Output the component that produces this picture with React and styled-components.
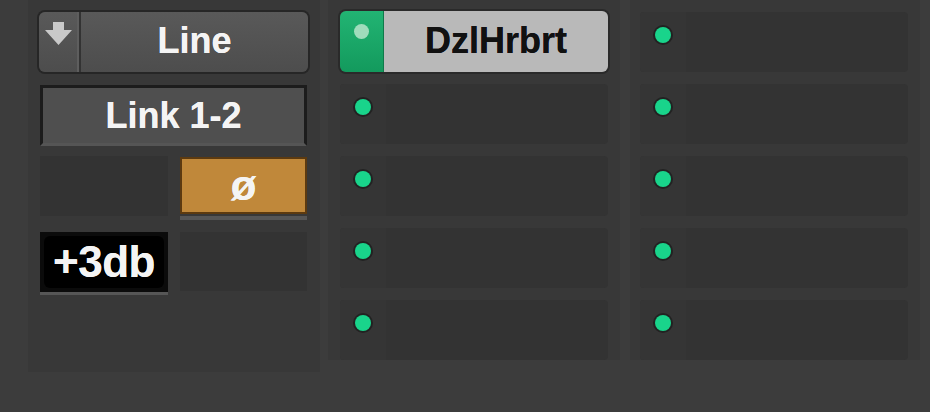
import styled, { createGlobalStyle } from "styled-components";

const GlobalStyle = createGlobalStyle`
  html, body {
    margin: 0;
    padding: 0;
    background: #3c3c3c;
    font-family: "Liberation Sans", Arial, sans-serif;
  }
`;

const Mixer = styled.div`
  display: flex;
  align-items: flex-start;
  width: 930px;
  height: 412px;
  padding-left: 28px;
  box-sizing: border-box;
  overflow: hidden;
`;

const LeftPanel = styled.div`
  width: 292px;
  height: 372px;
  box-sizing: border-box;
  padding: 10px 13px 0 12px;
  background: #383838;
  display: grid;
  grid-template-columns: 128px 127px;
  grid-auto-rows: min-content;
  column-gap: 12px;
`;

const Column = styled.div`
  width: ${(p) => p.$width}px;
  height: 360px;
  margin-left: ${(p) => p.$gap}px;
  box-sizing: border-box;
  padding: 12px 12px 0 ${(p) => p.$pad}px;
  background: #383838;
  display: flex;
  flex-direction: column;
  gap: 12px;
`;

const LabelText = styled.span`
  font-size: ${(p) => p.$size || 36}px;
  font-weight: bold;
  color: ${(p) => p.$color || "#f4f4f4"};
  letter-spacing: ${(p) => p.$track || 0}px;
  line-height: 1;
  text-shadow: 0 0 0.6px ${(p) => p.$color || "#f4f4f4"};
`;

const SelectButton = styled.div`
  grid-column: 1 / 3;
  height: 60px;
  margin: 2px -1px 13px -1px;
  border-radius: 6px;
  box-shadow: 0 0 0 2px #262626;
  background: linear-gradient(#595959, #4d4d4d);
  display: flex;
  overflow: hidden;
`;

const ArrowSegment = styled.div`
  width: 42px;
  border-right: 2px solid #333;
  box-shadow: inset -2px 0 0 #5e5e5e;
  display: flex;
  justify-content: center;
  padding-top: 10px;
  box-sizing: border-box;
`;

const SegmentLabel = styled.div`
  flex: 1;
  display: flex;
  align-items: center;
  justify-content: center;
  padding-bottom: 2px;
`;

const WideButton = styled.div`
  grid-column: 1 / 3;
  height: 61px;
  box-sizing: border-box;
  border: 3px solid #1c1c1c;
  border-bottom: 3px solid #555;
  background: #4f4f4f;
  display: flex;
  align-items: center;
  justify-content: center;
  margin-bottom: 10px;
`;

const Slot = styled.div`
  height: ${(p) => p.$h || 60}px;
  background: ${(p) => p.$bg || "#333"};
  margin-bottom: ${(p) => p.$mb ?? 16}px;
  border-bottom: ${(p) => (p.$bar ? "3px solid #565656" : "none")};
  display: flex;
  align-items: center;
  justify-content: center;
  box-sizing: border-box;
`;

const PhaseButton = styled.div`
  height: 57px;
  margin: 1px 0 18px;
  border: 2px solid #5c3a10;
  background: #c0883a;
  display: flex;
  align-items: center;
  justify-content: center;
  box-sizing: border-box;
  position: relative;
  &::after {
    content: "";
    position: absolute;
    left: -2px;
    right: -2px;
    bottom: -8px;
    height: 4px;
    background: #565656;
  }
`;

const GainBox = styled.div`
  width: 120px;
  height: 52px;
  border-radius: 6px;
  background: #000;
  display: flex;
  align-items: center;
  justify-content: center;
`;

const Cell = styled.div`
  height: 60px;
  border-radius: 4px;
  background: #333;
  display: flex;
  flex-shrink: 0;
`;

const CellHandle = styled.div`
  width: 46px;
  background: #353535;
  border-radius: 4px 0 0 4px;
  display: flex;
  justify-content: center;
  padding-top: 15px;
  box-sizing: border-box;
`;

const Dot = styled.div`
  width: ${(p) => p.$d || 16}px;
  height: ${(p) => p.$d || 16}px;
  border-radius: 50%;
  background: ${(p) => p.$color || "#19d48b"};
  box-shadow: 0 0 0 2px ${(p) => p.$ring || "#222"};
`;

const RouteButton = styled.div`
  height: 61px;
  border-radius: 6px;
  box-shadow: 0 0 0 2px #2a2a2a;
  display: flex;
  overflow: hidden;
  flex-shrink: 0;
  margin-top: -1px;
`;

const RouteHandle = styled.div`
  width: 44px;
  background: linear-gradient(#22b473, #139a5d);
  border-right: 1px solid #0f7a4a;
  display: flex;
  justify-content: center;
  padding-top: 13px;
  box-sizing: border-box;
`;

const RouteLabel = styled.div`
  flex: 1;
  background: #b9b9b9;
  display: flex;
  align-items: center;
  justify-content: center;
  padding-bottom: 2px;
`;

const DownArrow = () => (
  <svg width="30" height="24" viewBox="0 0 30 24">
    <path d="M9 0 H20 V8 H28 L14.5 23 L1 8 H9 Z" fill="#c9c9c9" />
  </svg>
);

const EmptyCell = () => (
  <Cell>
    <CellHandle>
      <Dot />
    </CellHandle>
  </Cell>
);

export default function App() {
  return (
    <>
      <GlobalStyle />
      <Mixer>
        <LeftPanel>
          <SelectButton>
            <ArrowSegment>
              <DownArrow />
            </ArrowSegment>
            <SegmentLabel>
              <LabelText>Line</LabelText>
            </SegmentLabel>
          </SelectButton>
          <WideButton>
            <LabelText>Link 1-2</LabelText>
          </WideButton>
          <Slot />
          <PhaseButton>
            <LabelText $size={42}>ø</LabelText>
          </PhaseButton>
          <Slot $bg="#0b0b0b" $h={63} $bar $mb={0}>
            <GainBox>
              <LabelText $size={44} $track={-0.5}>+3db</LabelText>
            </GainBox>
          </Slot>
          <Slot $h={59} $mb={0} />
        </LeftPanel>

        <Column $width={292} $gap={8} $pad={12}>
          <RouteButton>
            <RouteHandle>
              <Dot $d={15} $color="#9fdcbc" $ring="transparent" />
            </RouteHandle>
            <RouteLabel>
              <LabelText $color="#111">DzlHrbrt</LabelText>
            </RouteLabel>
          </RouteButton>
          {[0, 1, 2, 3].map((i) => (
            <EmptyCell key={i} />
          ))}
        </Column>

        <Column $width={290} $gap={10} $pad={10}>
          {[0, 1, 2, 3, 4].map((i) => (
            <EmptyCell key={i} />
          ))}
        </Column>
      </Mixer>
    </>
  );
}
